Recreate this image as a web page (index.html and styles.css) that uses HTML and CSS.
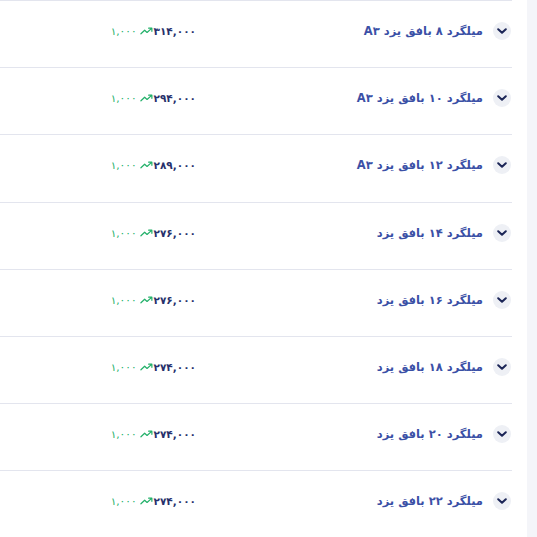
FILE: index.html
```html
<!DOCTYPE html>
<html lang="fa">
<head>
<meta charset="utf-8">
<link rel="stylesheet" href="styles.css">
</head>
<body>
<div class="page">
  <div class="list">
    <div class="row">
      <span class="toggle"><svg viewBox="0 0 10 6" width="10" height="6"><path d="M1.2 1.2 L5 4.8 L8.8 1.2" fill="none" stroke="#1c2657" stroke-width="2" stroke-linecap="round" stroke-linejoin="round"/></svg></span>
      <span class="title">میلگرد ۸ بافق یزد A۳</span>
      <span class="price">۳۱۴,۰۰۰</span>
      <span class="trend"><svg viewBox="0 0 14 8" width="13" height="8"><path d="M1 7 L5 3.2 L7.6 5.6 L12.5 1.2 M9.3 1 L12.8 1 L12.8 4.3" fill="none" stroke="#22b069" stroke-width="1.3" stroke-linecap="round" stroke-linejoin="round"/></svg></span>
      <span class="change">۱,۰۰۰</span>
    </div>
    <div class="row">
      <span class="toggle"><svg viewBox="0 0 10 6" width="10" height="6"><path d="M1.2 1.2 L5 4.8 L8.8 1.2" fill="none" stroke="#1c2657" stroke-width="2" stroke-linecap="round" stroke-linejoin="round"/></svg></span>
      <span class="title">میلگرد ۱۰ بافق یزد A۳</span>
      <span class="price">۲۹۴,۰۰۰</span>
      <span class="trend"><svg viewBox="0 0 14 8" width="13" height="8"><path d="M1 7 L5 3.2 L7.6 5.6 L12.5 1.2 M9.3 1 L12.8 1 L12.8 4.3" fill="none" stroke="#22b069" stroke-width="1.3" stroke-linecap="round" stroke-linejoin="round"/></svg></span>
      <span class="change">۱,۰۰۰</span>
    </div>
    <div class="row">
      <span class="toggle"><svg viewBox="0 0 10 6" width="10" height="6"><path d="M1.2 1.2 L5 4.8 L8.8 1.2" fill="none" stroke="#1c2657" stroke-width="2" stroke-linecap="round" stroke-linejoin="round"/></svg></span>
      <span class="title">میلگرد ۱۲ بافق یزد A۳</span>
      <span class="price">۲۸۹,۰۰۰</span>
      <span class="trend"><svg viewBox="0 0 14 8" width="13" height="8"><path d="M1 7 L5 3.2 L7.6 5.6 L12.5 1.2 M9.3 1 L12.8 1 L12.8 4.3" fill="none" stroke="#22b069" stroke-width="1.3" stroke-linecap="round" stroke-linejoin="round"/></svg></span>
      <span class="change">۱,۰۰۰</span>
    </div>
    <div class="row">
      <span class="toggle"><svg viewBox="0 0 10 6" width="10" height="6"><path d="M1.2 1.2 L5 4.8 L8.8 1.2" fill="none" stroke="#1c2657" stroke-width="2" stroke-linecap="round" stroke-linejoin="round"/></svg></span>
      <span class="title">میلگرد ۱۴ بافق یزد</span>
      <span class="price">۲۷۶,۰۰۰</span>
      <span class="trend"><svg viewBox="0 0 14 8" width="13" height="8"><path d="M1 7 L5 3.2 L7.6 5.6 L12.5 1.2 M9.3 1 L12.8 1 L12.8 4.3" fill="none" stroke="#22b069" stroke-width="1.3" stroke-linecap="round" stroke-linejoin="round"/></svg></span>
      <span class="change">۱,۰۰۰</span>
    </div>
    <div class="row">
      <span class="toggle"><svg viewBox="0 0 10 6" width="10" height="6"><path d="M1.2 1.2 L5 4.8 L8.8 1.2" fill="none" stroke="#1c2657" stroke-width="2" stroke-linecap="round" stroke-linejoin="round"/></svg></span>
      <span class="title">میلگرد ۱۶ بافق یزد</span>
      <span class="price">۲۷۶,۰۰۰</span>
      <span class="trend"><svg viewBox="0 0 14 8" width="13" height="8"><path d="M1 7 L5 3.2 L7.6 5.6 L12.5 1.2 M9.3 1 L12.8 1 L12.8 4.3" fill="none" stroke="#22b069" stroke-width="1.3" stroke-linecap="round" stroke-linejoin="round"/></svg></span>
      <span class="change">۱,۰۰۰</span>
    </div>
    <div class="row">
      <span class="toggle"><svg viewBox="0 0 10 6" width="10" height="6"><path d="M1.2 1.2 L5 4.8 L8.8 1.2" fill="none" stroke="#1c2657" stroke-width="2" stroke-linecap="round" stroke-linejoin="round"/></svg></span>
      <span class="title">میلگرد ۱۸ بافق یزد</span>
      <span class="price">۲۷۴,۰۰۰</span>
      <span class="trend"><svg viewBox="0 0 14 8" width="13" height="8"><path d="M1 7 L5 3.2 L7.6 5.6 L12.5 1.2 M9.3 1 L12.8 1 L12.8 4.3" fill="none" stroke="#22b069" stroke-width="1.3" stroke-linecap="round" stroke-linejoin="round"/></svg></span>
      <span class="change">۱,۰۰۰</span>
    </div>
    <div class="row">
      <span class="toggle"><svg viewBox="0 0 10 6" width="10" height="6"><path d="M1.2 1.2 L5 4.8 L8.8 1.2" fill="none" stroke="#1c2657" stroke-width="2" stroke-linecap="round" stroke-linejoin="round"/></svg></span>
      <span class="title">میلگرد ۲۰ بافق یزد</span>
      <span class="price">۲۷۴,۰۰۰</span>
      <span class="trend"><svg viewBox="0 0 14 8" width="13" height="8"><path d="M1 7 L5 3.2 L7.6 5.6 L12.5 1.2 M9.3 1 L12.8 1 L12.8 4.3" fill="none" stroke="#22b069" stroke-width="1.3" stroke-linecap="round" stroke-linejoin="round"/></svg></span>
      <span class="change">۱,۰۰۰</span>
    </div>
    <div class="row">
      <span class="toggle"><svg viewBox="0 0 10 6" width="10" height="6"><path d="M1.2 1.2 L5 4.8 L8.8 1.2" fill="none" stroke="#1c2657" stroke-width="2" stroke-linecap="round" stroke-linejoin="round"/></svg></span>
      <span class="title">میلگرد ۲۲ بافق یزد</span>
      <span class="price">۲۷۴,۰۰۰</span>
      <span class="trend"><svg viewBox="0 0 14 8" width="13" height="8"><path d="M1 7 L5 3.2 L7.6 5.6 L12.5 1.2 M9.3 1 L12.8 1 L12.8 4.3" fill="none" stroke="#22b069" stroke-width="1.3" stroke-linecap="round" stroke-linejoin="round"/></svg></span>
      <span class="change">۱,۰۰۰</span>
    </div>
  </div>
  <div class="rail"></div>
</div>
</body>
</html>
```

FILE: styles.css
```css
html, body {
  margin: 0;
  padding: 0;
  background: #ffffff;
  overflow: hidden;
}
.page {
  display: flex;
  width: 537px;
  height: 537px;
  font-family: "DejaVu Sans", "Noto Sans", sans-serif;
}
.list {
  width: 512px;
  flex: none;
  border-top: 1px solid #e3e5ee;
}
.rail {
  margin-left: 15px;
  width: 10px;
  flex: none;
  background: #f4f5f9;
}
.row {
  direction: rtl;
  display: flex;
  align-items: center;
  height: 60.2px;
  padding-bottom: 6px;
  border-bottom: 1px solid #e3e5ee;
  padding-right: 1px;
  box-sizing: content-box;
}
.toggle {
  width: 18px;
  height: 18px;
  border-radius: 50%;
  background: #eef0f5;
  display: flex;
  align-items: center;
  justify-content: center;
  flex: none;
}
.toggle svg { display: block; }
.title {
  width: 277px;
  margin-right: 10px;
  flex: none;
  font-size: 11.5px;
  font-weight: bold;
  color: #3b50a6;
  white-space: nowrap;
}
.price {
  margin-right: 10px;
  font-size: 10.5px;
  font-weight: bold;
  color: #27306b;
}
.trend {
  margin-right: 1px;
  display: flex;
  align-items: center;
}
.trend svg { display: block; }
.change {
  margin-right: 3px;
  font-size: 10.5px;
  color: #22b069;
}
```
